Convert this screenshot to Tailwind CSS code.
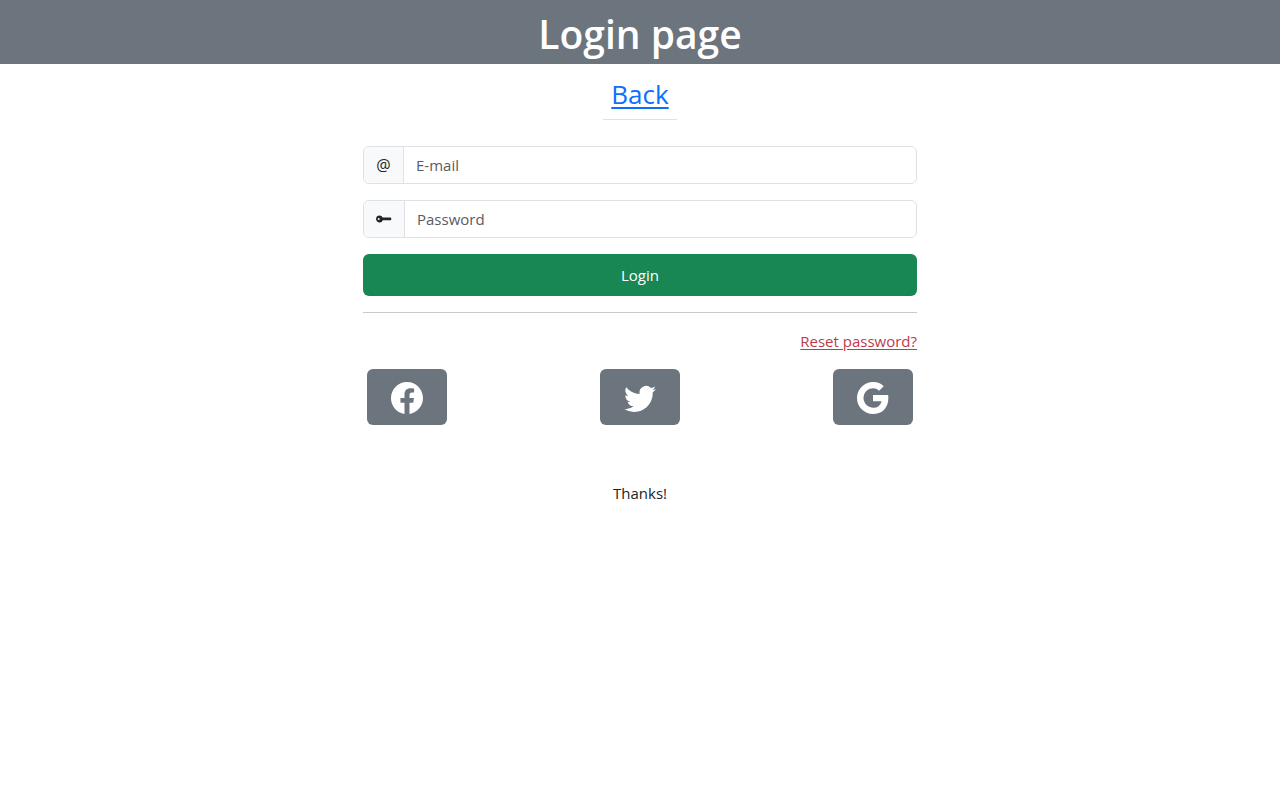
<!DOCTYPE html>
<html lang="en">
<head>
<meta charset="utf-8">
<meta name="viewport" content="width=device-width, initial-scale=1">
<title>Login page</title>
<script src="https://cdn.jsdelivr.net/npm/@tailwindcss/browser@4"></script>
</head>
<body class="bg-white font-['Segoe_UI','Open_Sans',sans-serif] text-[15px] leading-6 text-[#212529]">
<header class="flex h-16 items-center justify-center bg-[#6c757d] pt-1">
  <h1 class="text-[39px] leading-12 font-semibold text-white">Login page</h1>
</header>
<main class="mx-auto flex w-full max-w-[554px] flex-col">
  <nav class="mx-auto mt-2 flex h-12 items-center border-b border-[#dee2e6] px-2 pb-1 text-[26px]">
    <a href="#" class="text-[#0d6efd] underline decoration-2 underline-offset-3">Back</a>
  </nav>
  <form class="mt-[26px] flex flex-col gap-4">
    <div class="flex h-[38px] overflow-hidden rounded-md border border-[#dee2e6]">
      <label for="email" class="flex w-10 items-center justify-center border-r border-[#dee2e6] bg-[#f8f9fa] text-base" aria-label="E-mail">@</label>
      <input id="email" type="email" placeholder="E-mail" class="min-w-0 flex-1 px-3 outline-none placeholder:text-[#595c5f]">
    </div>
    <div class="flex h-[38px] overflow-hidden rounded-md border border-[#dee2e6]">
      <label for="password" class="flex items-center border-r border-[#dee2e6] bg-[#f8f9fa] px-3" aria-label="Password">
        <svg class="size-4" viewBox="0 0 16 16" fill="currentColor" aria-hidden="true"><path fill-rule="evenodd" d="M3.5 4.5a3.5 3.5 0 0 1 3.2 2H14a1.4 1.4 0 0 1 0 2.8H6.8A3.5 3.5 0 1 1 3.5 4.5M2.7 7a1 1 0 1 0 0 2 1 1 0 0 0 0-2"/></svg>
      </label>
      <input id="password" type="password" placeholder="Password" class="min-w-0 flex-1 px-3 outline-none placeholder:text-[#595c5f]">
    </div>
    <button type="submit" class="h-[42px] rounded-md bg-[#198754] text-white">Login</button>
  </form>
  <hr class="mt-4 border-[#c8c9ca]">
  <a href="#" class="mt-4 self-end text-[#c0394b] underline underline-offset-2">Reset password?</a>
  <div class="mt-4 flex justify-between px-1">
    <button type="button" aria-label="Facebook" class="flex h-14 w-20 items-center justify-center rounded-md bg-[#6c757d] pt-0.5 text-white">
      <svg class="size-8" viewBox="0 0 16 16" fill="currentColor"><path d="M16 8.049c0-4.446-3.582-8.05-8-8.05C3.58 0-.002 3.603-.002 8.05c0 4.017 2.926 7.347 6.75 7.951v-5.625h-2.03V8.05H6.75V6.275c0-2.017 1.195-3.131 3.022-3.131.876 0 1.791.157 1.791.157v1.98h-1.009c-.993 0-1.303.621-1.303 1.258v1.51h2.218l-.354 2.326H9.25V16c3.824-.604 6.75-3.934 6.75-7.951"/></svg>
    </button>
    <button type="button" aria-label="Twitter" class="flex h-14 w-20 items-center justify-center rounded-md bg-[#6c757d] pt-0.5 text-white">
      <svg class="size-8" viewBox="0 0 16 16" fill="currentColor"><path d="M5.026 15c6.038 0 9.341-5.003 9.341-9.334q.002-.211-.006-.422A6.7 6.7 0 0 0 16 3.542a6.7 6.7 0 0 1-1.889.518 3.3 3.3 0 0 0 1.447-1.817 6.5 6.5 0 0 1-2.087.793A3.286 3.286 0 0 0 7.875 6.03a9.32 9.32 0 0 1-6.767-3.429 3.29 3.29 0 0 0 1.018 4.382A3.3 3.3 0 0 1 .64 6.575v.045a3.29 3.29 0 0 0 2.632 3.218 3.2 3.2 0 0 1-.865.115 3 3 0 0 1-.614-.057 3.28 3.28 0 0 0 3.067 2.277A6.6 6.6 0 0 1 .78 13.58a6 6 0 0 1-.78-.045A9.34 9.34 0 0 0 5.026 15"/></svg>
    </button>
    <button type="button" aria-label="Google" class="flex h-14 w-20 items-center justify-center rounded-md bg-[#6c757d] pt-0.5 text-white">
      <svg class="size-8" viewBox="0 0 16 16" fill="currentColor"><path d="M15.545 6.558a9.4 9.4 0 0 1 .139 1.626c0 2.434-.87 4.492-2.384 5.885h.002C11.978 15.292 10.158 16 8 16A8 8 0 1 1 8 0a7.7 7.7 0 0 1 5.352 2.082l-2.284 2.284A4.35 4.35 0 0 0 8 3.166c-2.087 0-3.86 1.408-4.492 3.304a4.8 4.8 0 0 0 0 3.063h.003c.635 1.893 2.405 3.301 4.492 3.301 1.078 0 2.004-.276 2.722-.764h-.003a3.7 3.7 0 0 0 1.599-2.431H8v-3.08z"/></svg>
    </button>
  </div>
</main>
<footer class="mt-14 text-center">Thanks!</footer>
</body>
</html>
